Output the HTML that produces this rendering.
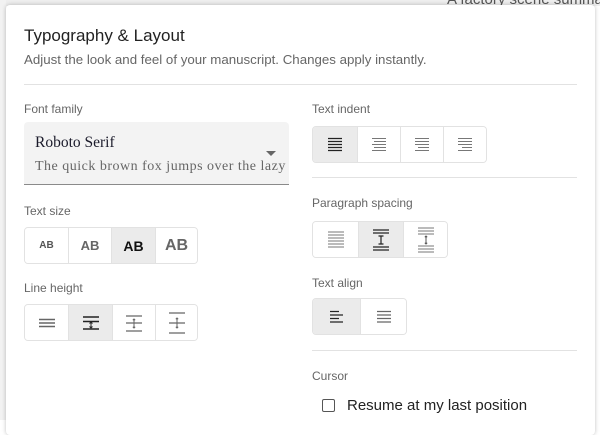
<!DOCTYPE html>
<html><head><style>
*{box-sizing:border-box;margin:0;padding:0}
body{width:600px;height:420px;overflow:hidden;background:#fff;font-family:"Liberation Sans",sans-serif;position:relative}
.bgtop{position:absolute;left:0;top:0;width:600px;height:6px;background:#eeeeee}
.bgleft{position:absolute;left:0;top:0;width:6px;height:420px;background:#f2f2f2}
.bgtxt{position:absolute;left:447px;top:-9px;font-size:15px;color:#555;white-space:nowrap}
.dlg{position:absolute;left:6px;top:5px;width:589px;height:430px;background:#fff;box-shadow:0 0 4px rgba(0,0,0,.25);border-radius:4px}
.a{position:absolute;white-space:nowrap}
.title{left:24px;top:26px;font-size:17px;color:#222}
.sub{left:24px;top:52px;font-size:13.3px;color:#666}
.hr{position:absolute;height:1px;background:#e2e2e2}
.lbl{font-size:12px;color:#666}
.sel{left:24px;top:122px;width:265px;height:63px;background:#f3f3f3;border-radius:4px 4px 0 0;border-bottom:1px solid #8a8a8a;font-family:"Liberation Serif",serif;overflow:hidden}
.grp{position:absolute;display:flex;border:1px solid #e2e2e2;border-radius:4px;overflow:hidden}
.grp div{display:flex;align-items:center;justify-content:center;border-left:1px solid #e2e2e2;background:#fff}
.grp div:first-child{border-left:none}
.grp div.on{background:#ebebeb}
</style></head><body>
<div class="bgtop"></div><div class="bgleft"></div>
<div class="bgtxt">A factory scene summary</div>
<div class="dlg"></div>
<div class="a title">Typography &amp; Layout</div>
<div class="a sub">Adjust the look and feel of your manuscript. Changes apply instantly.</div>
<div class="hr" style="left:24px;top:84px;width:553px"></div>

<div class="a lbl" style="left:24px;top:102px">Font family</div>
<div class="a sel">
  <div class="a" style="left:11px;top:12px;font-size:15.5px;color:#1a1a2a">Roboto Serif</div>
  <div class="a" style="left:11px;top:37px;font-size:14px;color:#666;white-space:nowrap;letter-spacing:.5px">The quick brown fox jumps over the lazy dog</div>
  <div class="a" style="left:242px;top:29px;width:0;height:0;border-left:5px solid transparent;border-right:5px solid transparent;border-top:5px solid #666"></div>
</div>

<div class="a lbl" style="left:24px;top:204px">Text size</div>
<div class="grp" style="left:24px;top:227px;height:37px">
  <div style="width:43px;font-size:10px;font-weight:bold;color:#555">AB</div>
  <div style="width:43px;font-size:13px;font-weight:bold;color:#666">AB</div>
  <div class="on" style="width:44px;font-size:14px;font-weight:bold;color:#111">AB</div>
  <div style="width:42px;font-size:16px;font-weight:bold;color:#666">AB</div>
</div>

<div class="a lbl" style="left:24px;top:281px">Line height</div>
<div class="grp" style="left:24px;top:304px;height:37px">
  <div style="width:43px"><svg width="18" height="14"><path d="M1 3.5h16M1 7h16M1 10.5h16" stroke="#666" stroke-width="1.5"/></svg></div>
  <div class="on" style="width:44px"><svg width="18" height="18"><path d="M1 3h16M1 7.5h16M1 15h16" stroke="#222" stroke-width="1.5"/><path d="M9 8v6M7.5 9.5L9 8l1.5 1.5M7.5 12.5L9 14l1.5-1.5" stroke="#222" fill="none"/></svg></div>
  <div style="width:43px"><svg width="18" height="20"><path d="M1 3h16M1 10h16M1 18h16" stroke="#666" stroke-width="1.2"/><path d="M9 6v9M7.8 7.2L9 6l1.2 1.2M7.8 13.8L9 15l1.2-1.2" stroke="#666" fill="none"/></svg></div>
  <div style="width:42px"><svg width="18" height="24"><path d="M1 2h16M1 12h16M1 22h16" stroke="#666" stroke-width="1.2"/><path d="M9 7v10M7.8 8.2L9 7l1.2 1.2M7.8 15.8L9 17l1.2-1.2" stroke="#666" fill="none"/></svg></div>
</div>

<div class="a lbl" style="left:312px;top:102px">Text indent</div>
<div class="grp" style="left:312px;top:126px;height:37px">
  <div class="on" style="width:44px"><svg width="14" height="16"><path d="M0 1.5h14M0 4.5h14M0 7.5h14M0 10.5h14M0 13.5h14" stroke="#222" stroke-width="1.2"/></svg></div>
  <div style="width:43px"><svg width="14" height="16"><path d="M0 1.5h14M2 4.5h12M0 7.5h14M2 10.5h12M0 13.5h14" stroke="#777" stroke-width="1"/></svg></div>
  <div style="width:43px"><svg width="14" height="16"><path d="M0 1.5h14M0 4.5h14M0 7.5h14M3 10.5h11M0 13.5h14" stroke="#777" stroke-width="1"/></svg></div>
  <div style="width:43px"><svg width="14" height="16"><path d="M0 1.5h14M0 4.5h14M0 7.5h14M4 10.5h10M0 13.5h14" stroke="#777" stroke-width="1"/></svg></div>
</div>
<div class="hr" style="left:312px;top:177px;width:265px"></div>

<div class="a lbl" style="left:312px;top:196px">Paragraph spacing</div>
<div class="grp" style="left:312px;top:221px;height:37px">
  <div style="width:45px"><svg width="16" height="22"><path d="M0 3h16M0 6h16M0 9h16M0 12h16M0 15h16M0 18h16" stroke="#777" stroke-width="1"/></svg></div>
  <div class="on" style="width:45px"><svg width="16" height="24"><path d="M0 2h16M0 5h16M0 19h16M0 22h16" stroke="#222" stroke-width="1.3"/><path d="M8 8v8M5.5 8h5M5.5 16h5" stroke="#222" stroke-width="1.2"/></svg></div>
  <div style="width:44px"><svg width="16" height="28"><path d="M0 2h16M0 5h16M0 8h16M0 20h16M0 23h16M0 26h16" stroke="#777" stroke-width="1"/><path d="M8 10v8M6.8 11.2L8 10l1.2 1.2M6.8 16.8L8 18l1.2-1.2" stroke="#555" fill="none"/></svg></div>
</div>

<div class="a lbl" style="left:312px;top:276px">Text align</div>
<div class="grp" style="left:312px;top:298px;height:37px">
  <div class="on" style="width:47px"><svg width="14" height="14"><path d="M0 1.5h9M0 5h13M0 8.5h9M0 12h13" stroke="#222" stroke-width="1.3"/></svg></div>
  <div style="width:46px"><svg width="14" height="14"><path d="M0 1.5h14M0 5h14M0 8.5h14M0 12h14" stroke="#666" stroke-width="1.3"/></svg></div>
</div>
<div class="hr" style="left:312px;top:350px;width:265px"></div>

<div class="a lbl" style="left:312px;top:369px">Cursor</div>
<div class="a" style="left:322px;top:399px;width:13px;height:13px;border:1.5px solid #555;border-radius:2px"></div>
<div class="a" style="left:347px;top:397px;font-size:15px;color:#222">Resume at my last position</div>
</body></html>
